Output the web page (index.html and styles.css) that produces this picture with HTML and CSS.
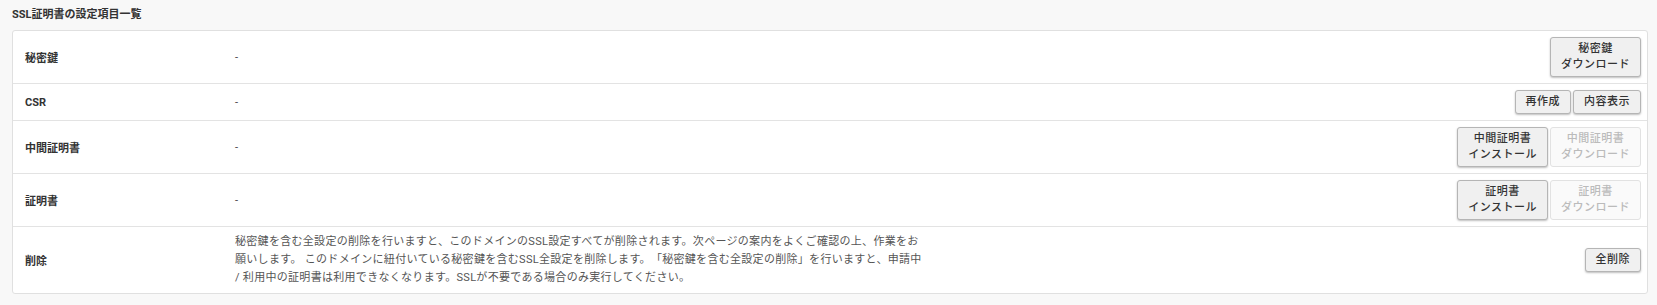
FILE: index.html
```html
<!DOCTYPE html>
<html lang="ja">
<head>
  <meta charset="UTF-8" />
  <title>SSL証明書の設定項目一覧</title>
  <link rel="stylesheet" href="styles.css">
</head>
<body>

  <div class="page">
    <h3 class="section-title">SSL証明書の設定項目一覧</h3>

    <div class="card">
      <!-- 秘密鍵 -->
      <div class="row">
        <div class="label">秘密鍵</div>
        <div class="value">-</div>
        <div class="actions">
          <button class="btn">秘密鍵<br>ダウンロード</button>
        </div>
      </div>

      <!-- CSR -->
      <div class="row">
        <div class="label">CSR</div>
        <div class="value">-</div>
        <div class="actions">
          <button class="btn">再作成</button>
          <button class="btn">内容表示</button>
        </div>
      </div>

      <!-- 中間証明書 -->
      <div class="row">
        <div class="label">中間証明書</div>
        <div class="value">-</div>
        <div class="actions">
          <button class="btn">中間証明書<br>インストール</button>
          <button class="btn" disabled>中間証明書<br>ダウンロード</button>
        </div>
      </div>

      <!-- 証明書 -->
      <div class="row">
        <div class="label">証明書</div>
        <div class="value">-</div>
        <div class="actions">
          <button class="btn">証明書<br>インストール</button>
          <button class="btn" disabled>証明書<br>ダウンロード</button>
        </div>
      </div>

      <!-- 削除 -->
      <div class="row">
        <div class="label">削除</div>
        <div class="value description">秘密鍵を含む全設定の削除を行いますと、このドメインのSSL設定すべてが削除されます。次ページの案内をよくご確認の上、作業をお願いします。 このドメインに紐付いている秘密鍵を含むSSL全設定を削除します。「秘密鍵を含む全設定の削除」を行いますと、申請中 / 利用中の証明書は利用できなくなります。SSLが不要である場合のみ実行してください。</div>
        <div class="actions">
          <button class="btn">全削除</button>
        </div>
      </div>
    </div>
  </div>

</body>
</html>
```

FILE: styles.css
```css
* {
  box-sizing: border-box;
}
html, body {
  margin: 0;
  padding: 0;
  font-family: Roboto, "Noto Sans CJK JP", sans-serif;
  background-color: #f8f8f8;
  color: #333;
}
.page {
  padding: 0 9px 0 12px;
}
.section-title {
  margin: 0;
  padding: 7px 0 7px;
  font-size: 11px;
  line-height: 16px;
  font-weight: bold;
  color: #333;
}
.card {
  background: #fff;
  border: 1px solid #e0e0e0;
  border-radius: 3px;
}
.row {
  display: grid;
  grid-template-columns: 210px 1fr auto;
  align-items: center;
  padding: 6px 6px 6px 12px;
  border-top: 1px solid #e3e3e3;
}
.row:first-child {
  border-top: none;
}
.label {
  font-size: 11px;
  font-weight: bold;
  color: #333;
}
.value {
  font-size: 11px;
  color: #444;
}
.description {
  width: 688px;
  line-height: 18px;
  letter-spacing: 0.3px;
  text-spacing-trim: space-all;
  color: #555;
}
.actions {
  display: flex;
  gap: 2px;
  justify-content: flex-end;
}
.btn {
  font-family: Roboto, "Noto Sans CJK JP", sans-serif;
  font-size: 11px;
  font-weight: 500;
  line-height: 16px;
  letter-spacing: 0.5px;
  padding: 3px 10px;
  color: #333;
  background: #f0f0f0;
  border: 1px solid #b5b5b5;
  border-radius: 3px;
  box-shadow: 0 1px 2px rgba(0, 0, 0, 0.25);
  cursor: pointer;
}
.btn:hover {
  background: #e6e6e6;
}
.btn:disabled {
  color: #bbb;
  background: #fafafa;
  border-color: #e2e2e2;
  box-shadow: none;
  cursor: default;
}
```
